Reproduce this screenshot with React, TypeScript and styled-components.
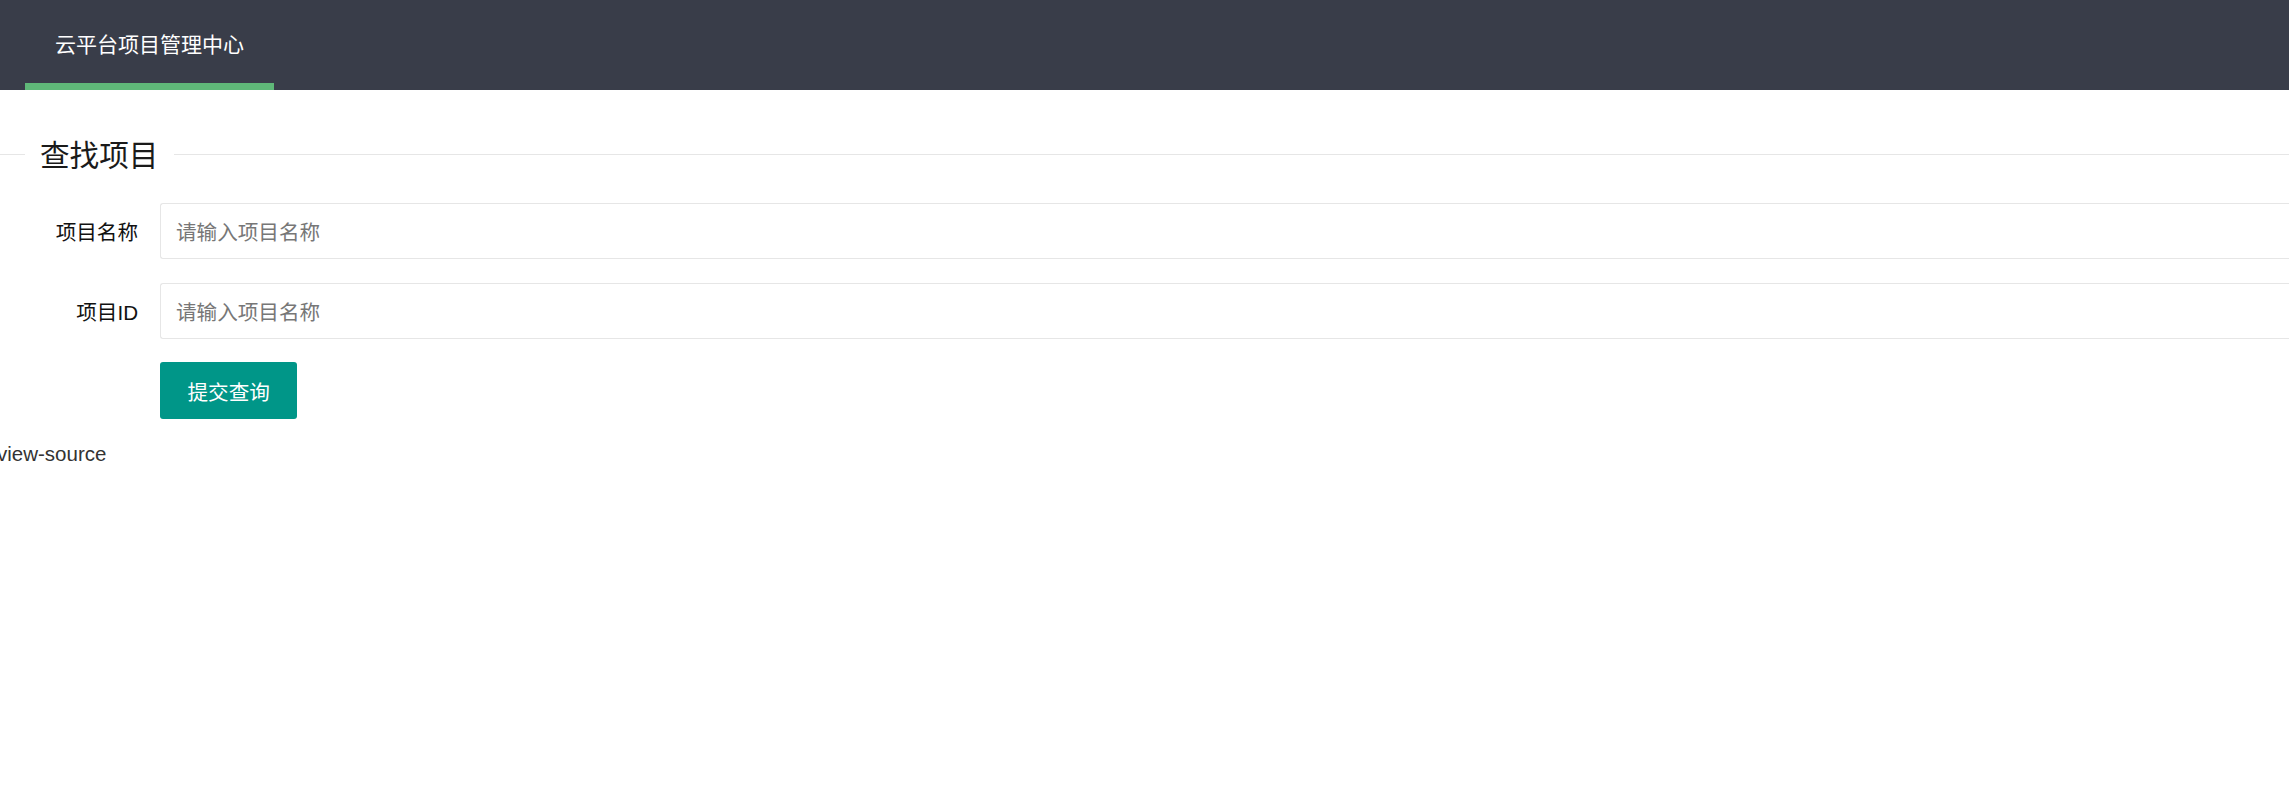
import React from "react";
import styled, { createGlobalStyle } from "styled-components";

const GlobalStyle = createGlobalStyle`
  html, body {
    margin: 0;
    padding: 0;
    background: #fff;
    overflow-x: hidden;
  }
  body {
    font-family: "Liberation Sans", "Noto Sans CJK SC", Arial, sans-serif;
    color: #333;
  }
  * {
    box-sizing: border-box;
  }
`;

const Header = styled.header`
  height: 90px;
  background: #393d49;
  padding-left: 25px;
  display: flex;
`;

const NavItem = styled.a<{ $active?: boolean }>`
  position: relative;
  display: flex;
  align-items: center;
  padding: 0 30px 4px;
  font-size: 21px;
  color: #fff;
  text-decoration: none;
  font-family: "Noto Sans CJK SC", sans-serif;

  &::after {
    content: "";
    position: absolute;
    left: 0;
    right: 0;
    bottom: 0;
    height: 7px;
    background: ${(p) => (p.$active ? "#5fb878" : "transparent")};
  }
`;

const Content = styled.main`
  width: 100%;
`;

const FieldTitle = styled.div`
  display: flex;
  align-items: center;
  height: 44px;
  margin-top: 42px;
  margin-bottom: 27px;

  &::before,
  &::after {
    content: "";
    height: 1px;
    background: #e6e6e6;
  }
  &::before {
    width: 25px;
  }
  &::after {
    flex: 1;
  }
`;

const Legend = styled.span`
  padding: 0 16px 0 15px;
  font-size: 29.6px;
  font-weight: 400;
  color: #1a1a1a;
  font-family: "Noto Sans CJK SC", sans-serif;
  line-height: 44px;
`;

const Form = styled.form`
  display: flex;
  flex-direction: column;
  gap: 24px;
`;

const FormItem = styled.div`
  display: flex;
  align-items: center;
`;

const Label = styled.label`
  width: 160px;
  flex: none;
  padding-right: 22px;
  text-align: right;
  font-size: 20.6px;
  color: #111;
  font-family: "Noto Sans CJK SC", sans-serif;

  & > b {
    font-weight: normal;
    font-family: "Liberation Sans", Arial, sans-serif;
  }
`;

const Input = styled.input`
  flex: 1;
  min-width: 0;
  height: 56px;
  border: 1px solid #e6e6e6;
  border-right: none;
  border-radius: 3px 0 0 3px;
  padding: 0 15px;
  font-size: 20.6px;
  font-family: "Noto Sans CJK SC", sans-serif;
  color: #333;
  outline: none;

  &::placeholder {
    color: #777;
  }
`;

const ButtonRow = styled.div`
  padding-left: 160px;
  margin-top: -1px;
`;

const Button = styled.button`
  height: 57px;
  padding: 0 27.5px;
  border: none;
  border-radius: 3px;
  background: #009688;
  color: #fff;
  font-size: 20.6px;
  font-family: "Noto Sans CJK SC", sans-serif;
  cursor: pointer;
`;

const Footnote = styled.div`
  margin-top: 22px;
  margin-left: -3px;
  font-size: 20.5px;
  line-height: 25px;
  color: #333;
  font-family: "Liberation Sans", Arial, sans-serif;
`;

const App: React.FC = () => {
  return (
    <>
      <GlobalStyle />
      <Header>
        <NavItem href="#" $active>
          云平台项目管理中心
        </NavItem>
      </Header>
      <Content>
        <FieldTitle>
          <Legend>查找项目</Legend>
        </FieldTitle>
        <Form onSubmit={(e) => e.preventDefault()}>
          <FormItem>
            <Label>项目名称</Label>
            <Input type="text" placeholder="请输入项目名称" />
          </FormItem>
          <FormItem>
            <Label>
              项目<b>ID</b>
            </Label>
            <Input type="text" placeholder="请输入项目名称" />
          </FormItem>
          <ButtonRow>
            <Button type="submit">提交查询</Button>
          </ButtonRow>
        </Form>
        <Footnote>view-source</Footnote>
      </Content>
    </>
  );
};

export default App;
